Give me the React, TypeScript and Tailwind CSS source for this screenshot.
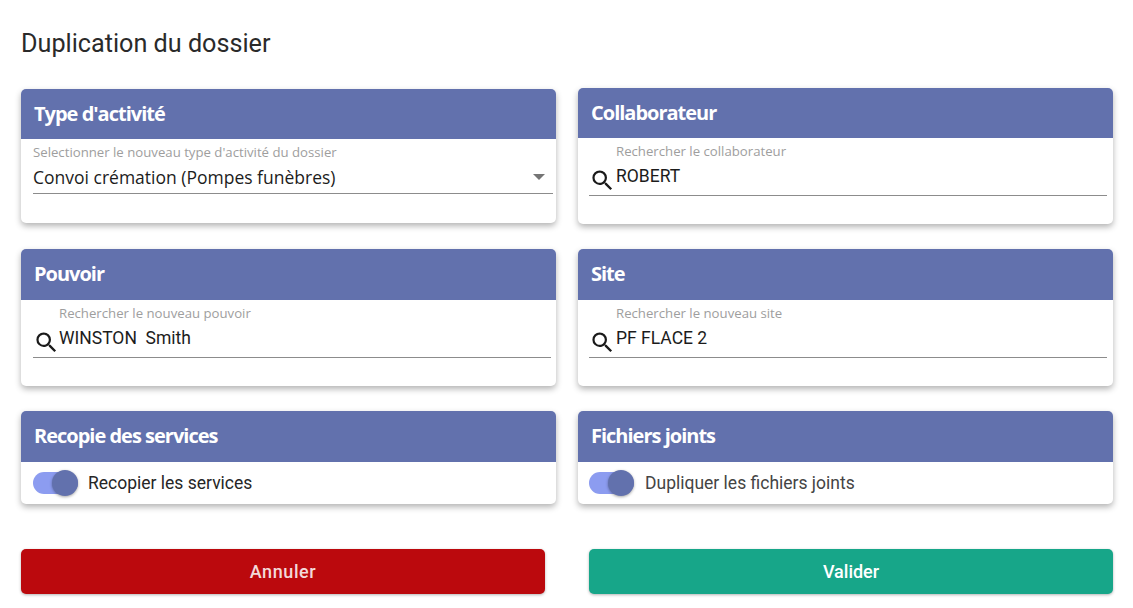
const roboto = "font-['Roboto',sans-serif]";
const openSans = "font-['Open_Sans',sans-serif]";

function Card({ title, headClass, bodyClass, className, children }: { title: string; headClass: string; bodyClass: string; className?: string; children: React.ReactNode }) {
  return (
    <section className={`rounded-[5px] bg-white shadow-[0_3px_6px_rgba(0,0,0,0.3)] ${className ?? ''}`}>
      <header className={`flex items-center rounded-t-[5px] bg-[#6271ad] px-[13px] ${headClass}`}>
        <h2 className={`${openSans} text-[20px] font-bold tracking-[-1px] text-white`}>{title}</h2>
      </header>
      <div className={bodyClass}>{children}</div>
    </section>
  );
}

function SearchIcon() {
  return (
    <svg viewBox="0 0 24 24" className="absolute left-0 top-[29px] h-[27px] w-[27px]" fill="#1a1a1a">
      <path d="M15.5 14h-.79l-.28-.27A6.47 6.47 0 0 0 16 9.5 6.5 6.5 0 1 0 9.5 16c1.61 0 3.09-.59 4.23-1.57l.27.28v.79l5 4.99L20.49 19l-4.99-5zm-6 0C7.01 14 5 11.99 5 9.5S7.01 5 9.5 5 14 7.01 14 9.5 11.99 14 9.5 14z" />
    </svg>
  );
}

function SearchField({ label, value, indent }: { label: string; value: string; indent: string }) {
  return (
    <div className={`relative h-[58px] border-b border-[#8c8c8c] pt-[4px] ${indent}`}>
      <SearchIcon />
      <div className={`${openSans} text-[13.2px] leading-[18px] text-[#9e9e9e]`}>{label}</div>
      <div className={`${roboto} mt-[4px] whitespace-pre text-[17.5px] leading-[24px] text-[#1c1c1c]`}>{value}</div>
    </div>
  );
}

function Toggle({ label, rowClass, textClass }: { label: string; rowClass: string; textClass: string }) {
  return (
    <div className={`flex h-[42px] items-center ${rowClass}`}>
      <div className="relative h-[22px] w-[45px] shrink-0 rounded-full bg-[#8c9cf0]">
        <div className="absolute right-0 top-[-2px] h-[26px] w-[26px] rounded-full bg-[#6271ad] shadow-[0_1px_3px_rgba(0,0,0,0.35)]" />
      </div>
      <span className={`${roboto} text-[17.5px] ${textClass}`}>{label}</span>
    </div>
  );
}

export default function App() {
  return (
    <div className="h-[608px] w-[1133px] overflow-hidden bg-white pl-[21px] pr-[20px] pt-[28px]">
      <h1 className={`${roboto} text-[25.2px] leading-[32px] text-[#2a2a2a]`}>Duplication du dossier</h1>

      <div className="mt-[29px] grid grid-cols-[535px_535px] gap-x-[22px] gap-y-[25px]">
        <Card title="Type d'activité" headClass="h-[50px]" bodyClass="h-[84px] pl-[12px] pr-[3px] pt-[4px]" className="self-start">
          <div className="relative h-[51px] border-b border-[#8c8c8c]">
            <div className={`${openSans} text-[13.2px] leading-[18px] text-[#9e9e9e]`}>Selectionner le nouveau type d'activité du dossier</div>
            <div className={`${openSans} mt-[4px] text-[17.5px] leading-[24px] text-[#1c1c1c]`}>Convoi crémation (Pompes funèbres)</div>
            <div className="absolute right-[8px] top-[31px] h-0 w-0 border-x-[6px] border-t-[6px] border-x-transparent border-t-[#757575]" />
          </div>
        </Card>
        <Card title="Collaborateur" headClass="h-[50px] pb-[1px]" bodyClass="h-[86px] pl-[11px] pr-[6px]" className="-mt-px">
          <SearchField label="Rechercher le collaborateur" value="ROBERT" indent="pl-[27px]" />
        </Card>
        <Card title="Pouvoir" headClass="h-[51px] pb-[2px]" bodyClass="h-[86px] pl-[12px] pr-[5px]">
          <SearchField label="Rechercher le nouveau pouvoir" value="WINSTON  Smith" indent="pl-[26px]" />
        </Card>
        <Card title="Site" headClass="h-[51px] pb-[2px]" bodyClass="h-[86px] pl-[11px] pr-[6px]">
          <SearchField label="Rechercher le nouveau site" value="PF FLACE 2" indent="pl-[27px]" />
        </Card>
        <Card title="Recopie des services" headClass="h-[51px] pb-[2px]" bodyClass="h-[42px]">
          <Toggle label="Recopier les services" rowClass="pl-[12px]" textClass="ml-[10px] text-[#262626]" />
        </Card>
        <Card title="Fichiers joints" headClass="h-[51px] pb-[2px]" bodyClass="h-[42px]">
          <Toggle label="Dupliquer les fichiers joints" rowClass="pl-[11px]" textClass="ml-[11px] text-[#444444]" />
        </Card>
      </div>

      <div className="mt-[45px] flex justify-between">
        <button className={`${roboto} h-[45px] w-[524px] rounded-[5px] bg-[#bb090d] text-[18px] font-medium tracking-[0.6px] text-[#f3d9d9] shadow-[0_1px_3px_rgba(0,0,0,0.3)]`}>Annuler</button>
        <button className={`${roboto} h-[45px] w-[524px] rounded-[5px] bg-[#17a689] text-[18px] font-medium text-white shadow-[0_1px_3px_rgba(0,0,0,0.3)]`}>Valider</button>
      </div>
    </div>
  );
}
